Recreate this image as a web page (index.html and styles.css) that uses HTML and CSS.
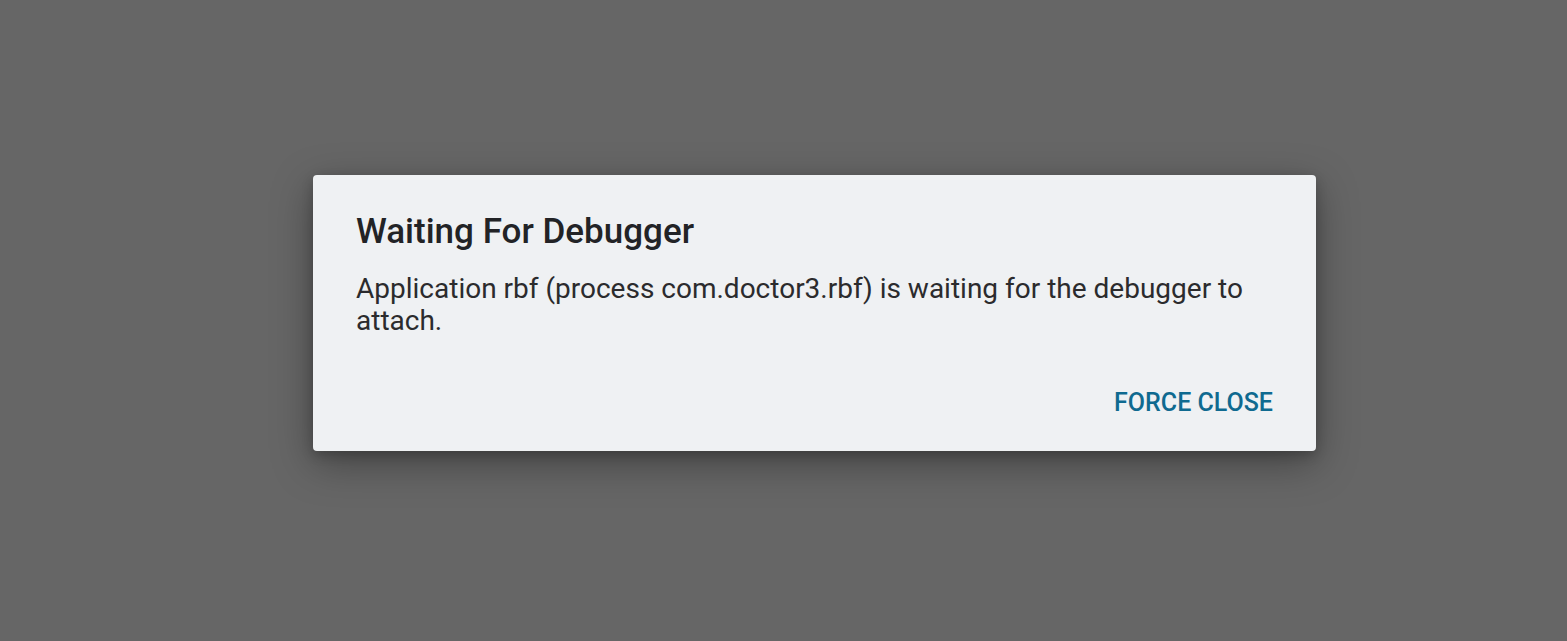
FILE: index.html
```html
<!DOCTYPE html>
<html>
<head>
<meta charset="utf-8">
<link rel="stylesheet" href="styles.css">
</head>
<body>
<div class="screen">
  <div class="dialog">
    <h1 class="title">Waiting For Debugger</h1>
    <p class="message">Application rbf (process com.doctor3.rbf) is waiting for the debugger to attach.</p>
    <div class="actions">
      <span class="button">FORCE CLOSE</span>
    </div>
  </div>
</div>
</body>
</html>
```
FILE: styles.css
```css
html, body {
  margin: 0;
  padding: 0;
  height: 100%;
  background: #666666;
}
.screen {
  height: 641px;
  display: flex;
  justify-content: flex-start;
  align-items: flex-start;
  padding: 175px 0 0 313px;
  box-sizing: border-box;
  font-family: Roboto, "Noto Sans", sans-serif;
}
.dialog {
  width: 1003px;
  height: 276px;
  box-sizing: border-box;
  background: #eff1f3;
  border-radius: 4px;
  padding: 37px 43px 0 43px;
  box-shadow: 0 12px 40px rgba(0,0,0,0.35), 0 4px 12px rgba(0,0,0,0.2);
}
.title {
  margin: 0;
  font-size: 35px;
  font-weight: 500;
  color: #222326;
  line-height: 40px;
}
.message {
  margin: 21px 0 0 0;
  font-size: 28px;
  line-height: 32px;
  color: #2b2b2d;
}
.actions {
  display: flex;
  justify-content: flex-end;
  margin-top: 51px;
}
.button {
  font-size: 25px;
  font-weight: 500;
  color: #0f6a90;
  line-height: 30px;
}
```
